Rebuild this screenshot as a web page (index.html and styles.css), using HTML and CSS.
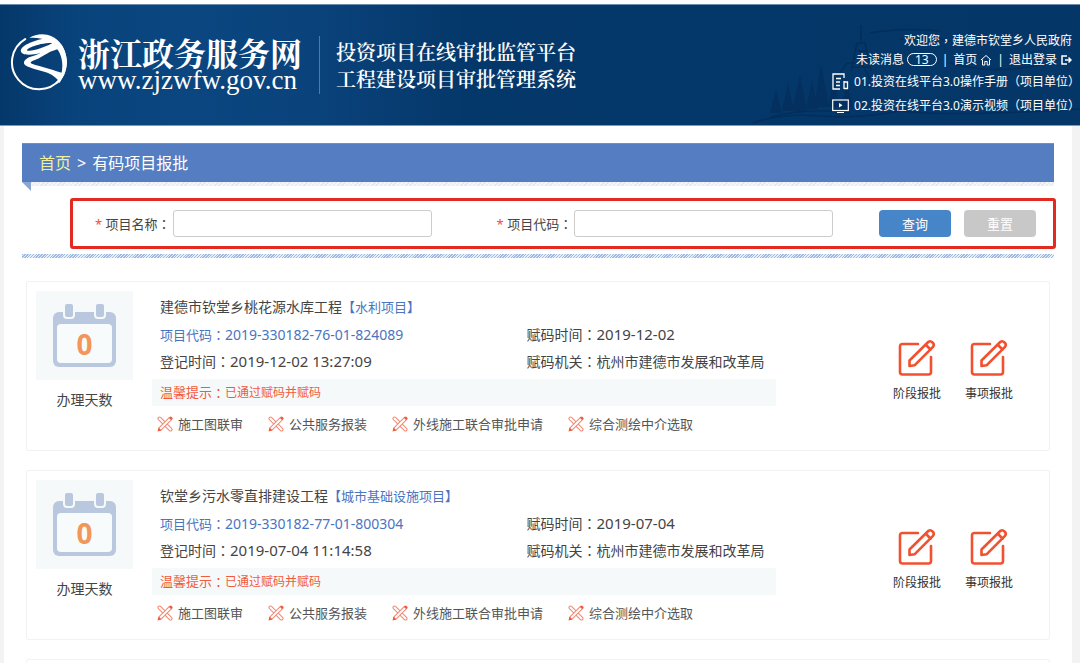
FILE: index.html
```html
<!DOCTYPE html>
<html lang="zh-CN">
<head>
<meta charset="utf-8">
<title>有码项目报批 - 浙江政务服务网</title>
<link rel="stylesheet" href="styles.css">
</head>
<body>
<svg class="defs" aria-hidden="true">
  <symbol id="i-edit" viewBox="0 0 38 38">
    <g fill="none" stroke="#f2512f" stroke-width="2.6" stroke-linecap="round" stroke-linejoin="round">
      <path d="M20 5H4.500Q2 5 2 7.500V33Q2 35.500 4.500 35.500H30.500Q33 35.500 33 33V18"/>
      <path d="M11.500 27V21.500L30.500 2.800Q32.500 1.500 34.500 3.500Q36.800 5.500 35 7.800L16.500 26.300Z"/>
      <path d="M28 6L32.500 10.500"/>
    </g>
  </symbol>
  <symbol id="i-cross" viewBox="0 0 16 16">
    <g fill="none" stroke-linecap="round">
      <path d="M2.500 2.500L13.500 13.500" stroke="#f08a74" stroke-width="4"/>
      <path d="M2.500 2.500L13.500 13.500" stroke="#fff" stroke-width="2"/>
      <path d="M13.500 2.500L3.500 12.500" stroke="#f08a74" stroke-width="4"/>
      <path d="M12.500 3.500L3.500 12.500" stroke="#fff" stroke-width="2"/>
    </g>
    <path d="M.5 15.500L1.500 11.500L4.500 14.500ZM12 1.800L14.200 4L15.500 2.500L14 .8Z" fill="#ee5a3c"/>
  </symbol>
  <symbol id="i-calendar" viewBox="0 0 63 63">
    <rect y="8" width="63" height="55" rx="6" fill="#b9c7df"/>
    <rect x="4" y="20" width="55" height="39" rx="4" fill="#f8fbfc"/>
    <g fill="#b9c7df" stroke="#f5f9fa" stroke-width="2">
      <rect x="11" y="-1" width="10" height="15" rx="3"/>
      <rect x="42" y="-1" width="10" height="15" rx="3"/>
    </g>
  </symbol>
</svg>

<header class="header">
  <svg class="skyline" viewBox="0 0 330 120" aria-hidden="true">
    <g fill="none" stroke="#022b57" stroke-width="1.500">
      <path d="M3 118Q30 108 70 111T150 106Q200 112 330 104M20 112Q60 102 100 108M200 58Q240 70 290 60"/>
      <path d="M111 20V36M107 38H115M105 46H117M103 54H119M101 62H121M107 38L101 66M115 38L121 66M85 74L97 58H112L120 74"/>
      <path d="M120 28Q150 22 190 26M150 34Q180 30 200 36"/>
    </g>
    <g fill="#032e5c">
      <path d="M20 108L26 84L32 108ZM32 106L38 78L44 106ZM42 106L50 70L57 106ZM56 104L62 76L68 104ZM64 102L71 60L79 102ZM78 102L84 72L90 102ZM90 104L97 78L104 104Z"/>
    </g>
  </svg>
  <div class="brand">
    <svg class="logo" viewBox="17 17 172 172" role="img" aria-label="浙江政务服务网标志">
      <path d="M62 35A80 80 0 1 0 142 34" fill="none" stroke="#fff" stroke-width="6" stroke-linecap="round"/>
      <g fill="#fff">
        <path d="M74 32C105 12 145 20 166 47C182 66 189 95 182 125C178 145 168 160 155 170C172 145 176 115 169 90C164 70 150 50 128 40C110 32 90 30 74 32Z"/>
        <path d="M128 32C95 36 50 53 49 70C51 88 90 81 118 74L163 57L150 42C128 58 85 70 69 70C60 66 95 48 140 46Z"/>
        <path d="M164 54C130 58 118 74 92 83C66 90 56 98 59 109C64 120 105 126 128 135C146 143 158 152 164 165L179 138C150 127 108 117 82 108C72 103 84 99 100 93C124 83 130 70 168 64Z"/>
      </g>
    </svg>
    <div class="site">
      <div class="site-name">浙江政务服务网</div>
      <div class="site-url">www.zjzwfw.gov.cn</div>
    </div>
    <div class="platform">投资项目在线审批监管平台<br>工程建设项目审批管理系统</div>
  </div>
  <div class="user">
    <div class="user-row">欢迎您<span class="mid" lang="zh-TW">，</span>建德市钦堂乡人民政府</div>
    <div class="user-row">
      <a href="#">未读消息 <span class="badge">13</span></a><span class="bar">|</span>
      <a href="#">首页
        <svg class="ico" viewBox="0 0 12 12" aria-hidden="true"><path d="M1 6L6 1.500L11 6M2.500 5.500V11H4.800V7.500H7.200V11H9.500V5.500" fill="none" stroke="#fff"/></svg></a><span class="bar">|</span>
      <a href="#">退出登录
        <svg class="ico" viewBox="0 0 12 12" aria-hidden="true"><path d="M7 2H2V10H7M5 6H11M8.500 3.500L11 6L8.500 8.500" fill="none" stroke="#fff" stroke-width="1.500"/></svg></a>
    </div>
    <a class="doc" href="#">
      <svg class="doc-ico" viewBox="0 0 17 17" aria-hidden="true"><path d="M8 16H1V1H12V5M4 5.500H9M4 9H8M4 12.500H8M12 8V16M12 9H15.500V15.500H12" fill="none" stroke="#fff" stroke-width="1.300"/></svg>
      <span>01.投资在线平台3.0操作手册<span class="mid" lang="zh-TW">（</span>项目单位<span class="mid" lang="zh-TW">）</span></span>
    </a>
    <a class="doc" href="#">
      <svg class="doc-ico" viewBox="0 0 17 17" aria-hidden="true"><rect x=".7" y="3" width="15.600" height="10.500" fill="none" stroke="#fff" stroke-width="1.200"/><path d="M7 6L10.500 8.200L7 10.400ZM5 15H12V16H5Z" fill="#fff"/></svg>
      <span>02.投资在线平台3.0演示视频<span class="mid" lang="zh-TW">（</span>项目单位<span class="mid" lang="zh-TW">）</span></span>
    </a>
  </div>
</header>

<main class="page">
  <nav class="crumbs"><a href="#">首页</a><span class="sep">&gt;</span><span>有码项目报批</span></nav>
  <form class="search">
    <div class="field">
      <label for="p-name"><span class="req">*</span> 项目名称<span class="mid" lang="zh-TW">：</span></label>
      <input id="p-name" type="text">
    </div>
    <div class="field">
      <label for="p-code"><span class="req">*</span> 项目代码<span class="mid" lang="zh-TW">：</span></label>
      <input id="p-code" type="text">
    </div>
    <div class="buttons">
      <button class="btn" type="button">查询</button>
      <button class="btn btn-reset" type="reset">重置</button>
    </div>
  </form>
  <div class="divider"></div>

  <section class="list">
    <article class="card">
      <div class="days">
        <div class="cal"><svg class="cal-ico" aria-hidden="true"><use href="#i-calendar"/></svg><span class="cal-num">0</span></div>
        <div>办理天数</div>
      </div>
      <div class="info">
        <h2 class="title">建德市钦堂乡桃花源水库工程<span class="tag">【水利项目】</span></h2>
        <div class="meta">
          <a class="code" href="#"><span class="code-label">项目代码<span class="mid" lang="zh-TW">：</span></span>2019-330182-76-01-824089</a>
          <div>赋码时间<span class="mid" lang="zh-TW">：</span><span class="num">2019-12-02</span></div>
          <div>登记时间<span class="mid" lang="zh-TW">：</span><span class="num">2019-12-02 13:27:09</span></div>
          <div>赋码机关<span class="mid" lang="zh-TW">：</span>杭州市建德市发展和改革局</div>
        </div>
        <div class="hint">温馨提示<span class="mid" lang="zh-TW">：</span><span class="hint-text">已通过赋码并赋码</span></div>
        <div class="links">
          <a href="#"><svg class="cross" aria-hidden="true"><use href="#i-cross"/></svg>施工图联审</a>
          <a href="#"><svg class="cross" aria-hidden="true"><use href="#i-cross"/></svg>公共服务报装</a>
          <a href="#"><svg class="cross" aria-hidden="true"><use href="#i-cross"/></svg>外线施工联合审批申请</a>
          <a href="#"><svg class="cross" aria-hidden="true"><use href="#i-cross"/></svg>综合测绘中介选取</a>
        </div>
      </div>
      <div class="actions">
        <a href="#"><svg class="edit" aria-hidden="true"><use href="#i-edit"/></svg>阶段报批</a>
        <a href="#"><svg class="edit" aria-hidden="true"><use href="#i-edit"/></svg>事项报批</a>
      </div>
    </article>

    <article class="card">
      <div class="days">
        <div class="cal"><svg class="cal-ico" aria-hidden="true"><use href="#i-calendar"/></svg><span class="cal-num">0</span></div>
        <div>办理天数</div>
      </div>
      <div class="info">
        <h2 class="title">钦堂乡污水零直排建设工程<span class="tag">【城市基础设施项目】</span></h2>
        <div class="meta">
          <a class="code" href="#"><span class="code-label">项目代码<span class="mid" lang="zh-TW">：</span></span>2019-330182-77-01-800304</a>
          <div>赋码时间<span class="mid" lang="zh-TW">：</span><span class="num">2019-07-04</span></div>
          <div>登记时间<span class="mid" lang="zh-TW">：</span><span class="num">2019-07-04 11:14:58</span></div>
          <div>赋码机关<span class="mid" lang="zh-TW">：</span>杭州市建德市发展和改革局</div>
        </div>
        <div class="hint">温馨提示<span class="mid" lang="zh-TW">：</span><span class="hint-text">已通过赋码并赋码</span></div>
        <div class="links">
          <a href="#"><svg class="cross" aria-hidden="true"><use href="#i-cross"/></svg>施工图联审</a>
          <a href="#"><svg class="cross" aria-hidden="true"><use href="#i-cross"/></svg>公共服务报装</a>
          <a href="#"><svg class="cross" aria-hidden="true"><use href="#i-cross"/></svg>外线施工联合审批申请</a>
          <a href="#"><svg class="cross" aria-hidden="true"><use href="#i-cross"/></svg>综合测绘中介选取</a>
        </div>
      </div>
      <div class="actions">
        <a href="#"><svg class="edit" aria-hidden="true"><use href="#i-edit"/></svg>阶段报批</a>
        <a href="#"><svg class="edit" aria-hidden="true"><use href="#i-edit"/></svg>事项报批</a>
      </div>
    </article>

    <article class="card card-next"></article>
  </section>
</main>
</body>
</html>
```
FILE: styles.css
```css
* { box-sizing: border-box; }

html { height: 100%; }

body {
  display: flex;
  flex-direction: column;
  height: 100%;
  margin: 0;
  overflow: hidden;
  border-top: 4px solid #fff;
  background: #f3f3f3;
  color: #444;
  font: 14px/20px "Noto Sans", "Noto Sans CJK SC", sans-serif;
}

a { color: inherit; text-decoration: none; }

.defs { position: absolute; width: 0; height: 0; }

.mid { font-family: "Noto Sans CJK TC", sans-serif; }

/* Header */
.header {
  position: relative;
  display: flex;
  flex: none;
  justify-content: space-between;
  min-height: 122px;
  border-top: 1px solid #6d8cab;
  border-bottom: 1px solid #7e9ab6;
  background: linear-gradient(90deg, #05386a 0, #09437c 7%, #0b4680 17%, #0a437c 28%, #05386a 43%, #043768 100%);
  color: #fff;
}

.skyline {
  position: absolute;
  right: 0;
  bottom: 0;
  width: 330px;
  height: 120px;
  opacity: .7;
}

.brand {
  display: flex;
  align-items: center;
  padding-left: 10px;
}

.logo { width: 58px; height: 58px; margin-bottom: 6px; }

.site {
  padding: 0 17px 2px 10px;
  border-right: 1px solid #55799f;
}

.site-name {
  font: 700 32px/32px "Noto Serif CJK SC", "Noto Sans CJK SC", serif;
}

.site-url {
  font: 27px/24px "Liberation Serif", serif;
}

.platform {
  padding-left: 16px;
  font: 600 20px/27px "Noto Serif CJK SC", "Noto Sans CJK SC", serif;
}

.user {
  position: relative;
  padding-top: 26px;
  font-size: 12px;
}

.user-row {
  display: flex;
  justify-content: flex-end;
  align-items: center;
  height: 19px;
  padding-right: 8px;
}

.user-row a { display: flex; align-items: center; gap: 3px; }

.bar { padding: 0 5px; }

.badge {
  padding: 0 7px;
  border: 1px solid #fff;
  border-radius: 8px;
  line-height: 11px;
}

.ico { width: 12px; height: 12px; }

.doc {
  display: flex;
  align-items: center;
  gap: 5px;
  height: 24px;
}

.doc-ico { width: 17px; height: 17px; }

/* Page body */
.page {
  flex: 1;
  min-height: 0;
  margin: 0 8px 0 4px;
  padding: 17px 18px 0;
  background: #fff;
  overflow: hidden;
}

.crumbs {
  position: relative;
  padding: 0 17px;
  border-top: 1px solid #6f90c8;
  background: #557dc1;
  color: #fff;
  font-size: 16px;
  line-height: 38px;
}

.crumbs a { color: #eef0a0; }

.sep { padding: 0 6px; }

.crumbs::before {
  content: "";
  position: absolute;
  top: 100%;
  left: 0;
  width: 9px;
  height: 9px;
  background: #8ba5d5;
  clip-path: polygon(0 0, 100% 0, 100% 100%);
}

.crumbs::after {
  content: "";
  position: absolute;
  top: 100%;
  left: 9px;
  right: 0;
  height: 4px;
  background: repeating-linear-gradient(135deg, #e3e6ef 0, #e3e6ef 1px, #f4f5f9 1px, #f4f5f9 3px);
}

.search {
  display: flex;
  align-items: center;
  margin: 16px -2px 0 48px;
  padding: 9px 17px 9px 22px;
  border: 3px solid #e22a20;
  border-radius: 3px;
  font-size: 13px;
}

.field { display: flex; align-items: center; gap: 2px; white-space: nowrap; }

.field + .field { margin-left: 65px; }

.req { color: #f04b43; }

.field input {
  width: 259px;
  height: 27px;
  border: 1px solid #ccc;
  border-radius: 3px;
  background: #fff;
  font: inherit;
}

.buttons { display: flex; gap: 13px; margin-left: auto; }

.btn {
  width: 72px;
  height: 27px;
  padding: 0;
  border: 0;
  border-radius: 4px;
  background: #4685c8;
  color: #fff;
  font: inherit;
}

.btn-reset { background: #c8c8c8; }

.divider {
  height: 4px;
  margin-top: 5px;
  background: repeating-linear-gradient(135deg, #9bb9e2 0, #9bb9e2 1px, #e6eef9 1px, #e6eef9 2px);
}

/* Project cards */
.list {
  display: grid;
  gap: 19px;
  padding: 23px 4px 0 4px;
}

.card {
  display: flex;
  padding: 9px 31px 13px 9px;
  border: 1px solid #f2f2f2;
  border-radius: 2px;
}

.days {
  width: 97px;
  text-align: center;
}

.cal {
  position: relative;
  height: 89px;
  margin-bottom: 10px;
  padding-top: 13px;
  background: #f5f9fa;
}

.cal-ico { display: block; width: 63px; height: 63px; margin: 0 auto; }

.cal-num {
  position: absolute;
  top: 38px;
  left: 0;
  right: 0;
  color: #f2965a;
  font: bold 28px/30px "Open Sans", sans-serif;
}

.info {
  flex: 1;
  min-width: 0;
  margin-left: 19px;
}

.title {
  display: flex;
  margin: 5px 8px 3px;
  font-size: 14px;
  font-weight: 400;
  line-height: 22px;
}

.tag { color: #4a74bf; font-size: 13px; }

.meta {
  display: grid;
  grid-template-columns: 119fr 81fr;
  grid-auto-rows: 27px;
  padding-left: 8px;
  line-height: 27px;
}

.num { font-size: 15px; }

.code { color: #4a74bf; }

.code-label { font-size: 13px; }

.hint {
  display: flex;
  margin-top: 4px;
  padding-left: 8px;
  background: #f5f9fa;
  color: #f2593d;
  font-size: 13px;
  line-height: 27px;
}

.hint-text { font-size: 12px; }

.links {
  display: flex;
  gap: 25px;
  margin-top: 5px;
  padding-left: 5px;
  font-size: 13px;
  line-height: 26px;
  color: #555;
}

.links a { display: flex; align-items: center; gap: 5px; white-space: nowrap; }

.cross { width: 16px; height: 16px; }

.actions {
  display: flex;
  align-items: center;
  gap: 24px;
  padding: 15px 5px 0 117px;
  font-size: 12px;
}

.actions a {
  display: grid;
  justify-items: center;
  gap: 7px;
  color: #333;
}

.edit { width: 38px; height: 38px; }
```
